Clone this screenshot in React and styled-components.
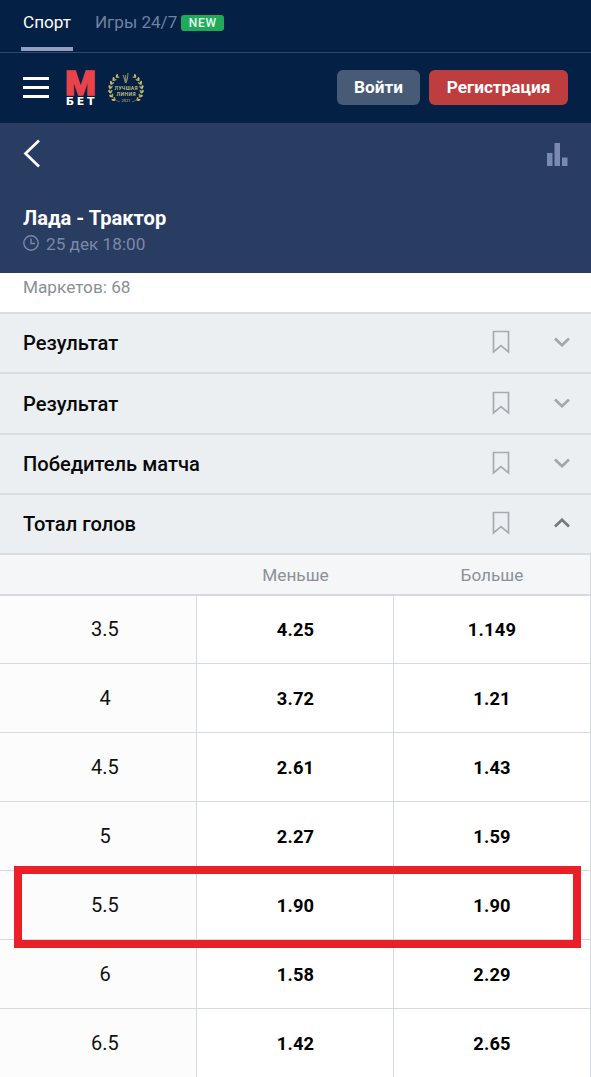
import React from 'react'
import styled, { createGlobalStyle } from 'styled-components'

const GlobalStyle = createGlobalStyle`
  body {
    margin: 0;
    background: #fff;
    font-family: Roboto, 'Liberation Sans', sans-serif;
  }

  * {
    box-sizing: border-box;
  }
`

const Page = styled.main`
  width: 591px;
  height: 1077px;
  overflow: hidden;
`

const Tabs = styled.nav`
  display: flex;
  height: 53px;
  padding-left: 21px;
  background: #042045;
  border-bottom: 1px solid #314768;
`

const Tab = styled.a`
  height: 51px;
  padding: 12px 2px 0;
  margin-right: 20px;
  font-size: 17.1px;
  line-height: 20px;
  color: ${({ $active }) => ($active ? '#fff' : '#71819f')};
  border-bottom: 4px solid ${({ $active }) => ($active ? '#939fc0' : 'transparent')};
`

const NewBadge = styled.span`
  width: 43px;
  height: 16px;
  margin: 15px 0 0 -18px;
  border-radius: 3px;
  background: #1faa59;
  color: #e9fff2;
  font-size: 12px;
  font-weight: 500;
  line-height: 16px;
  letter-spacing: 0.7px;
  text-align: center;
`

const Header = styled.header`
  display: flex;
  align-items: center;
  height: 70px;
  padding: 0 23px 1px;
  background: #042045;
`

const Burger = styled.div`
  display: flex;
  flex-direction: column;
  gap: 6px;
  width: 26px;
  margin-right: 17px;

  & span {
    height: 2.7px;
    background: #fff;
  }
`

const LogoMark = styled.svg`
  overflow: visible;
`

const Award = styled.svg`
  margin-left: 11px;
`

const Actions = styled.div`
  display: flex;
  gap: 9px;
  margin-left: auto;
`

const Button = styled.button`
  width: ${({ $width }) => $width};
  height: 35px;
  padding: 0 0 1px;
  border: 0;
  border-radius: 6px;
  background: ${({ $primary }) => ($primary ? '#be3e3f' : '#475b76')};
  color: #fff;
  font-family: inherit;
  font-size: 17.2px;
  font-weight: 700;
`

const Event = styled.section`
  height: 150px;
  padding: 16px 23px 0;
  background: #293c62;
`

const EventBar = styled.div`
  display: flex;
  justify-content: space-between;
  height: 67px;
`

const EventTitle = styled.h1`
  margin: 0;
  font-size: 20.1px;
  font-weight: 700;
  line-height: 24px;
  color: #fff;
`

const EventTime = styled.div`
  display: flex;
  align-items: center;
  gap: 7px;
  height: 28px;
  font-size: 17.2px;
  color: #7b89a8;
`

const Clock = styled.svg`
  margin-bottom: 3px;
`

const Count = styled.div`
  height: 39px;
  padding: 4px 23px;
  font-size: 17.2px;
  line-height: 21px;
  color: #8a8f94;
`

const Market = styled.div`
  display: flex;
  align-items: center;
  height: 60.3px;
  padding: 0.7px 21px 0 23px;
  border-top: 2px solid #d9dde0;
  background: #ebeff2;
  font-size: 20.1px;
  font-weight: 500;
  color: #08090b;
`

const MarketIcons = styled.div`
  display: flex;
  align-items: center;
  gap: 44px;
  margin-left: auto;
  padding-bottom: 2px;
`

const OddsTable = styled.div`
  width: 591px;
  border-right: 1px solid #d5dade;
`

const Row = styled.div`
  display: grid;
  grid-template-columns: 197px 197px 1fr;
  height: 69px;
  border-bottom: 1px solid #d5dade;
`

const HeadRow = styled(Row)`
  height: 43px;
  border-top: 2px solid #d9dde0;
  border-bottom-width: 2px;
  background: #f4f6f8;
  font-size: 17.2px;
  line-height: 40px;
  text-align: center;
  color: #8b9197;

  & + ${Row} {
    height: 68px;
  }
`

const Line = styled.div`
  display: flex;
  align-items: center;
  justify-content: center;
  padding: 0 0 1px 14px;
  border-right: 1px solid #d5dade;
  background: #fcfcfc;
  font-size: 20px;
  color: #111;
`

const Odd = styled.div`
  display: flex;
  align-items: center;
  justify-content: center;
  font-size: 18.3px;
  font-weight: 700;
  letter-spacing: 0.2px;
  color: #000;

  & + & {
    border-left: 1px solid #d5dade;
    margin-left: -1px;
  }
`

const Highlight = styled.div`
  position: absolute;
  left: 14px;
  top: 866px;
  width: 567px;
  height: 82px;
  border: 8px solid #ea1f27;
`

const markets = [
  { id: 1, name: 'Результат' },
  { id: 2, name: 'Результат' },
  { id: 3, name: 'Победитель матча' },
  { id: 4, name: 'Тотал голов', open: true },
]

const odds = [
  ['3.5', '4.25', '1.149'],
  ['4', '3.72', '1.21'],
  ['4.5', '2.61', '1.43'],
  ['5', '2.27', '1.59'],
  ['5.5', '1.90', '1.90'],
  ['6', '1.58', '2.29'],
  ['6.5', '1.42', '2.65'],
]

const leaves = [-52, -36, -20, -4, 12, 28, 44]

const Logo = () => (
  <LogoMark width="30" height="38" viewBox="0 0 30 38">
    <text x="-0.8" y="25.8" fill="#e8434b" stroke="#e8434b" strokeWidth="1.4" fontSize="34" fontWeight="900" textLength="30.5" lengthAdjust="spacingAndGlyphs">М</text>
    <text x="-0.3" y="36.3" fill="#fff" fontFamily="DejaVu Sans" fontSize="11" fontWeight="700" textLength="28.8" lengthAdjust="spacing">БЕТ</text>
  </LogoMark>
)

const Branch = () => (
  <g>
    <path d="M13 30 A15 14 0 0 1 8 6" fill="none" stroke="#8f8c55" strokeWidth="0.6" />
    {leaves.map((a) => (
      <g key={a} transform={`translate(19 17.5) rotate(${-a}) translate(-15.5 0)`}>
        <ellipse cx="-1.5" cy="0" rx="2" ry="1" transform="rotate(55)" fill="#c9c26b" />
        <ellipse cx="1.5" cy="0" rx="1.8" ry="0.8" transform="rotate(-55)" fill="#a9a45c" />
      </g>
    ))}
  </g>
)

const AwardLogo = () => (
  <Award width="38" height="32" viewBox="0 0 38 32">
    <Branch />
    <g transform="translate(38 0) scale(-1 1)">
      <Branch />
    </g>
    <path d="M16 3 L17.5 7 L18.5 11 M18.5 3 L19 10 M21 1 L20.5 6 L19 11" fill="none" stroke="#8d8a5c" strokeWidth="1.1" />
    <text x="7.5" y="18" fill="#d5d084" fontSize="5" fontWeight="500" textLength="23">ЛУЧШАЯ</text>
    <text x="9.5" y="24" fill="#d5d084" fontSize="5" fontWeight="500" textLength="19">ЛИНИЯ</text>
    <text x="14.5" y="30" fill="#c9c26b" fontSize="4" textLength="9">2021</text>
  </Award>
)

const MarketRow = ({ name, open }) => (
  <Market>
    {name}
    <MarketIcons>
      <svg width="18" height="24" viewBox="0 0 18 24" fill="none" stroke="#a6abaf" strokeWidth="1.7">
        <path d="M1.5 1.5 H16.5 V22 L9 15.5 L1.5 22 Z" />
      </svg>
      <svg width="16" height="10" viewBox="0 0 16 10" fill="none" stroke={open ? '#75797d' : '#a2a7ab'} strokeWidth="2.7">
        <path d={open ? 'M1 8.5 L8 1.8 L15 8.5' : 'M1 1.5 L8 8.2 L15 1.5'} />
      </svg>
    </MarketIcons>
  </Market>
)

const App = () => {
  return (
    <Page>
      <GlobalStyle />
      <Tabs>
        <Tab $active>Спорт</Tab>
        <Tab>Игры 24/7</Tab>
        <NewBadge>NEW</NewBadge>
      </Tabs>
      <Header>
        <Burger>
          <span />
          <span />
          <span />
        </Burger>
        <Logo />
        <AwardLogo />
        <Actions>
          <Button $width="83px">Войти</Button>
          <Button $width="139px" $primary>Регистрация</Button>
        </Actions>
      </Header>
      <Event>
        <EventBar>
          <svg width="18" height="29" viewBox="0 0 18 29" fill="none" stroke="#fff" strokeWidth="2.7">
            <path d="M16 1.5 L2.5 14.5 L16 27.5" />
          </svg>
          <svg width="21" height="32" viewBox="0 0 21 32" fill="#7b89ae">
            <path d="M0 14 H5.5 V27 H0 Z M7.5 4 H13 V27 H7.5 Z M15 18.5 H20.5 V27 H15 Z" />
          </svg>
        </EventBar>
        <EventTitle>Лада - Трактор</EventTitle>
        <EventTime>
          <Clock width="16" height="16" viewBox="0 0 16 16" fill="none" stroke="#7b89a8" strokeWidth="1.4">
            <circle cx="8" cy="8" r="7.2" />
            <path d="M8 3.5 V8.5 H12" />
          </Clock>
          25 дек 18:00
        </EventTime>
      </Event>
      <Count>Маркетов: 68</Count>
      {markets.map((market) => (
        <MarketRow key={market.id} name={market.name} open={market.open} />
      ))}
      <OddsTable>
        <HeadRow>
          <span />
          <span>Меньше</span>
          <span>Больше</span>
        </HeadRow>
        {odds.map(([line, under, over]) => (
          <Row key={line}>
            <Line>{line}</Line>
            <Odd>{under}</Odd>
            <Odd>{over}</Odd>
          </Row>
        ))}
      </OddsTable>
      <Highlight />
    </Page>
  )
}

export default App
